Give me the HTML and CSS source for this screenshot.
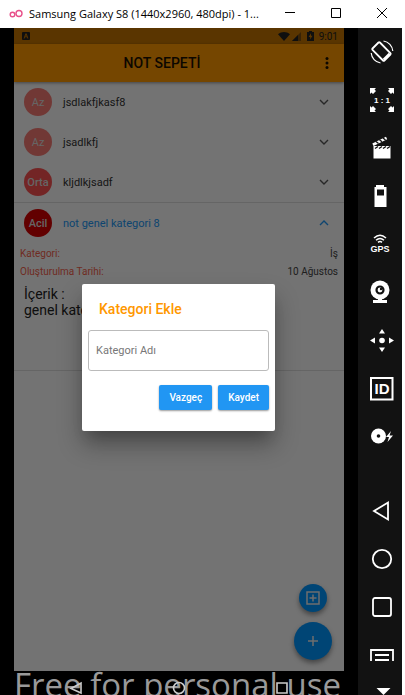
FILE: index.html
```html
<!DOCTYPE html>
<html lang="tr">
<head>
<meta charset="utf-8">
<title>Not Sepeti</title>
<link rel="stylesheet" href="styles.css">
</head>
<body>
<header class="titlebar">
  <svg class="logo" width="14" height="10" viewBox="0 0 14 10" fill="none" stroke="#e8508a" stroke-width="1.4"><circle cx="3.5" cy="5.5" r="2.3"/><circle cx="10" cy="4.5" r="3"/></svg>
  <span class="window-title">Samsung Galaxy S8 (1440x2960, 480dpi) - 1...</span>
  <button class="win-btn" aria-label="Minimize"><svg width="10" height="10" viewBox="0 0 10 10"><path d="M0 4.5h10" stroke="#000"/></svg></button>
  <button class="win-btn" aria-label="Maximize"><svg width="10" height="10" viewBox="0 0 10 10"><path d="M.5.5h9v9h-9z" fill="none" stroke="#000"/></svg></button>
  <button class="win-btn" aria-label="Close"><svg width="10" height="10" viewBox="0 0 10 10"><path d="M0 0l10 10M10 0L0 10" stroke="#000"/></svg></button>
</header>
<div class="emulator">
  <div class="device">
    <div class="screen">
      <div class="statusbar">
        <svg width="8" height="8" viewBox="0 0 8 8"><path fill="#222" fill-rule="evenodd" d="M1 0h6a1 1 0 0 1 1 1v6a1 1 0 0 1-1 1H1a1 1 0 0 1-1-1V1a1 1 0 0 1 1-1zM3.4 1.4L1.6 6.5h1l.4-1.2h2l.4 1.2h1L4.6 1.4zM4 2.700l.6 1.800H3.400z"/></svg>
        <span class="status-icons">
          <svg width="12" height="9" viewBox="0 0 12 9"><path fill="#222" d="M0 2.200C3.500-.6 8.500-.6 12 2.200L6 9z"/></svg>
          <svg width="9" height="9" viewBox="0 0 9 9"><path fill="#222" opacity=".45" d="M9 0v9H0z"/><path fill="#222" d="M6 3v6H0z"/></svg>
          <svg class="status-battery" width="7" height="10" viewBox="0 0 7 10"><path fill="#222" fill-rule="evenodd" d="M2 0h3v1h2v9H0V1h2zM4 2.200L1.600 6H3.200v2.600L5.500 4.800H4z"/></svg>
          <span>9:01</span>
        </span>
      </div>
      <div class="appbar">
        <h1>NOT SEPETİ</h1>
        <button class="menu" aria-label="Menü"><svg width="4" height="12" viewBox="0 0 4 12"><circle cx="2" cy="1.500" r="1.500"/><circle cx="2" cy="6" r="1.500"/><circle cx="2" cy="10.500" r="1.500"/></svg></button>
      </div>
      <main class="notes">
        <button class="note"><span class="badge low">Az</span><span class="name">jsdlakfjkasf8</span><svg width="10" height="6" viewBox="0 0 10 6"><path d="M1 1l4 4 4-4"/></svg></button>
        <button class="note"><span class="badge low">Az</span><span class="name">jsadlkfj</span><svg width="10" height="6" viewBox="0 0 10 6"><path d="M1 1l4 4 4-4"/></svg></button>
        <button class="note"><span class="badge mid">Orta</span><span class="name">kljdlkjsadf</span><svg width="10" height="6" viewBox="0 0 10 6"><path d="M1 1l4 4 4-4"/></svg></button>
        <section class="open-note">
          <button class="note active"><span class="badge high">Acil</span><span class="name">not genel kategori 8</span><svg width="10" height="6" viewBox="0 0 10 6"><path d="M1 5l4-4 4 4"/></svg></button>
          <dl class="details">
            <div><dt>Kategori:</dt><dd>İş</dd></div>
            <div><dt>Oluşturulma Tarihi:</dt><dd>10 Ağustos</dd></div>
          </dl>
          <p class="content">İçerik :<br>genel kategori</p>
        </section>
      </main>
      <div class="fabs">
        <button class="fab small" aria-label="Kategori ekle"><svg width="14" height="14" viewBox="0 0 14 14"><path d="M1 1h12v12H1zM7 3.500v7M3.500 7h7"/></svg></button>
        <button class="fab" aria-label="Not ekle"><svg width="10" height="10" viewBox="0 0 10 10"><path d="M5 0v10M0 5h10"/></svg></button>
      </div>
      <div class="scrim">
        <form class="dialog" role="dialog" aria-labelledby="dialog-title">
          <h2 id="dialog-title">Kategori Ekle</h2>
          <input type="text" aria-label="Kategori Adı" placeholder="Kategori Adı">
          <div class="actions"><button type="button">Vazgeç</button><button type="button">Kaydet</button></div>
        </form>
      </div>
    </div>
    <div class="navbar">
      <span class="watermark">Free for personal use</span>
      <div class="nav-icons">
        <button aria-label="Geri"><svg width="14" height="14" viewBox="0 0 14 14"><path d="M12 2v10L2 7.500z"/></svg></button>
        <button aria-label="Ana ekran"><svg width="14" height="14" viewBox="0 0 14 14"><circle cx="7" cy="7" r="5.500"/></svg></button>
        <button aria-label="Son uygulamalar"><svg width="14" height="14" viewBox="0 0 14 14"><path d="M2 2h10v10H2z"/></svg></button>
      </div>
    </div>
  </div>
  <aside class="tools">
    <button aria-label="Rotate"><svg viewBox="0 0 24 24" fill="none" stroke="#fff"><path stroke-width="1.800" d="M8.500 2.500l-6 6a1 1 0 0 0 0 1.400l10.500 10.600a1 1 0 0 0 1.400 0l6-6a1 1 0 0 0 0-1.400L9.900 2.500a1 1 0 0 0-1.400 0z"/><path stroke-width="2" d="M13.500 19.500l6-6"/><path d="M13.500 1A11 11 0 0 1 22.800 11M1.200 13a11 11 0 0 0 9.300 10" stroke-width="1.200"/></svg></button>
    <button aria-label="Pixel perfect"><svg viewBox="0 0 24 24" fill="#fff"><path d="M0 0h6L4.500 1.500 6 3 3 6 1.500 4.500 0 6zM24 0h-6l1.500 1.500L18 3l3 3 1.500-1.500L24 6zM0 24h6l-1.500-1.500L6 21l-3-3-1.500 1.500L0 18zM24 24h-6l1.500-1.500L18 21l3-3 1.500 1.500L24 18z"/><text x="12" y="15" text-anchor="middle">1 : 1</text></svg></button>
    <button aria-label="Screencast"><svg viewBox="0 0 24 24"><path fill="#fff" d="M3.500 10h17v12.500h-17zM2.300 7.600L16 .8l1.200 2.400L3.500 10z"/><path stroke="#121212" stroke-width="1.400" d="M5 12.500l3-2M9 12.500l3-2M13 12.500l3-2M17 12.500l3-2M6 5.500l2.500 2M9.500 3.700l2.500 2M13 2l2.500 2"/></svg></button>
    <hr>
    <button aria-label="Battery"><svg viewBox="0 0 24 24"><path fill="#fff" fill-rule="evenodd" d="M6 1h8v2h2.500v20H4.500V3H6zM7 5.500v6h7v-6z"/></svg></button>
    <button aria-label="GPS"><svg viewBox="0 0 24 24"><g fill="none" stroke="#fff" stroke-width="1.500"><path d="M4 6q6-5.500 12 0M6 8.200q4-3.500 8 0M8 10.300q2-1.600 4 0"/></g><text class="gps" x="10" y="20" text-anchor="middle">GPS</text></svg></button>
    <button aria-label="Camera"><svg viewBox="0 0 24 24"><path fill="#fff" d="M8 18h4v2h5v3H3v-3h5z"/><circle cx="10" cy="10" r="9.500" fill="#fff"/><circle cx="10" cy="10" r="3.500" fill="none" stroke="#121212" stroke-width="2.200"/><circle cx="11" cy="9" r="1.200" fill="#121212"/></svg></button>
    <button aria-label="Remote control"><svg viewBox="0 0 24 24" fill="#fff"><circle cx="12" cy="12.500" r="2.800"/><path d="M12 1l3 4.500H9zM12 24l3-4.500H9zM0 12.500l5-3v6zM24 12.500l-5-3v6z"/></svg></button>
    <button aria-label="Identifiers"><svg viewBox="0 0 24 24"><path fill="none" stroke="#fff" stroke-width="2" d="M1 2h21.500v21.500H1z"/><text class="id" x="12" y="18" text-anchor="middle">ID</text></svg></button>
    <button aria-label="Disk I/O"><svg viewBox="0 0 24 24"><circle cx="8.500" cy="12" r="7.500" fill="#fff"/><circle cx="8.500" cy="12" r="1.800" fill="#121212"/><path fill="#fff" d="M21 7l-5 6h3l-1.500 5 5.500-6.500h-3.500z"/></svg></button>
    <div class="system">
      <button aria-label="Back"><svg viewBox="0 0 24 24"><path fill="none" stroke="#fff" stroke-width="1.800" d="M18 3.500v17L4 12z"/></svg></button>
      <button aria-label="Home"><svg viewBox="0 0 24 24"><circle cx="12" cy="12" r="9.200" fill="none" stroke="#fff" stroke-width="1.800"/></svg></button>
      <button aria-label="Recent"><svg viewBox="0 0 24 24"><rect x="3" y="3" width="18" height="18" rx="2" fill="none" stroke="#fff" stroke-width="1.800"/></svg></button>
      <button aria-label="Menu"><svg viewBox="0 0 24 24"><path fill="none" stroke="#fff" stroke-width="1.800" d="M1 18V7h22v11M5 12h14M5 17h14"/></svg></button>
      <button aria-label="More"><svg viewBox="0 0 24 24"><path fill="#fff" d="M6.500-3h14l-7 7z"/></svg></button>
    </div>
  </aside>
</div>
</body>
</html>
```
FILE: styles.css
```css
* { box-sizing: border-box; }
body { margin: 0; height: 100vh; overflow: hidden; display: flex; flex-direction: column; background: #fff; font-family: Roboto, sans-serif; }
button { border: 0; padding: 0; background: none; font: inherit; color: inherit; }
svg { display: block; flex: none; overflow: visible; }
h1, h2, p, dl, dd { margin: 0; }

.titlebar { flex: none; display: flex; align-items: center; height: 28px; padding-left: 9px; color: #000; font: 11px "Open Sans", sans-serif; }
.window-title { flex: 1; min-width: 0; margin-left: 6px; padding-bottom: 2px; white-space: nowrap; }
.win-btn { flex: none; width: 46px; height: 28px; display: grid; place-items: center; padding-bottom: 3px; }

.emulator { flex: 1; min-height: 0; display: flex; margin-right: 3px; background: #000; }
.device { flex: 1; min-width: 0; display: flex; flex-direction: column; padding: 0 14px; }
.screen { flex: 1; min-height: 0; position: relative; display: flex; flex-direction: column; background: #fafafa; }

.statusbar { flex: none; height: 16px; display: flex; align-items: center; justify-content: space-between; padding: 0 6px 0 8px; background: #c47400; color: #222; font-size: 10px; }
.status-icons { display: flex; align-items: center; gap: 2px; }
.status-battery { margin: 0 3px 0 4px; }
.appbar { flex: none; height: 38px; display: flex; align-items: center; padding-right: 15px; background: #ff9800; box-shadow: 0 1px 3px rgba(0,0,0,.4); color: #1c1000; }
.appbar h1 { flex: 1; padding-right: 15px; text-align: center; font-size: 14px; font-weight: 500; }
.menu { fill: #1c1000; }

.note { width: 100%; height: 40px; display: flex; align-items: center; padding: 0 15px 0 10px; text-align: left; color: #333; font-size: 11px; }
.note .name { flex: 1; margin-left: 11px; }
.note svg { fill: none; stroke: #555; stroke-width: 1.4; }
.note.active { color: #2196f3; }
.note.active svg { stroke: #2196f3; }
.badge { flex: none; width: 28px; height: 28px; border-radius: 50%; display: grid; place-items: center; color: #ddd; font-size: 11px; font-weight: 500; }
.low { background: #f77a74; font-weight: 400; }
.mid { background: #fa5252; }
.high { background: #d50000; }
.open-note { height: 169px; border-top: 1px solid #ddd; border-bottom: 1px solid #ddd; }
.details { padding: 2px 6px 0; font-size: 10px; line-height: 18px; }
.details div { display: flex; justify-content: space-between; }
.details dt { color: #f4604a; }
.details dd { color: #444; }
.content { padding: 5px 10px; color: #222; font-size: 14px; line-height: 16px; }

.fabs { position: absolute; right: 12px; bottom: 11px; display: flex; flex-direction: column; align-items: center; gap: 10px; }
.fab { width: 38px; height: 38px; border-radius: 50%; display: grid; place-items: center; background: #0096ff; box-shadow: 0 3px 5px rgba(0,0,0,.4); }
.fab.small { width: 28px; height: 28px; }
.fab svg { fill: none; stroke: #eee; stroke-width: 1.5; }

.scrim { position: absolute; inset: 0; display: flex; align-items: center; padding: 16px 69px 0 68px; background: rgba(0,0,0,.54); }
.dialog { flex: 1; min-width: 0; padding: 16px 6px 21px; background: #fff; border-radius: 2px; box-shadow: 0 11px 15px -7px rgba(0,0,0,.2), 0 14px 24px rgba(0,0,0,.3); }
.dialog h2 { padding-left: 11px; color: #ff9800; font-size: 14px; line-height: 18px; font-weight: 500; }
.dialog input { display: block; width: 100%; height: 41px; margin-top: 12px; padding: 0 7px; border: 1px solid #bbb; border-radius: 3px; font: 11px Roboto, sans-serif; }
.dialog input::placeholder { color: #777; }
.actions { display: flex; justify-content: flex-end; gap: 6px; margin-top: 14px; }
.actions button { height: 25px; padding: 0 10px; border-radius: 2px; background: #2196f3; box-shadow: 0 1px 2px rgba(0,0,0,.4); color: #fff; font-size: 10px; font-weight: 500; }

.navbar { flex: none; height: 24px; position: relative; overflow: hidden; }
.watermark { display: block; color: #999; font: 33px/42px "Open Sans", sans-serif; white-space: nowrap; margin-top: -7px; }
.nav-icons { position: absolute; inset: 0; display: flex; justify-content: space-around; padding: 9px 11px 0 10px; }
.nav-icons svg { fill: none; stroke: #ccc; stroke-width: 1.6; }

.tools { flex: none; width: 44px; display: flex; flex-direction: column; padding-left: 4px; background: #121212; overflow: hidden; }
.tools button { flex: none; width: 40px; height: 48px; display: grid; place-items: center; }
.tools button svg { width: 24px; height: 24px; }
.tools hr { width: 32px; height: 1px; margin: 0 0 0 4px; border: 0; background: #888; }
.tools text { fill: #fff; font: bold 8px "Liberation Sans", sans-serif; }
.tools .gps { font-size: 9px; }
.tools .id { font: bold 15px "Liberation Sans", sans-serif; }
.system { margin-top: 27px; }
```
